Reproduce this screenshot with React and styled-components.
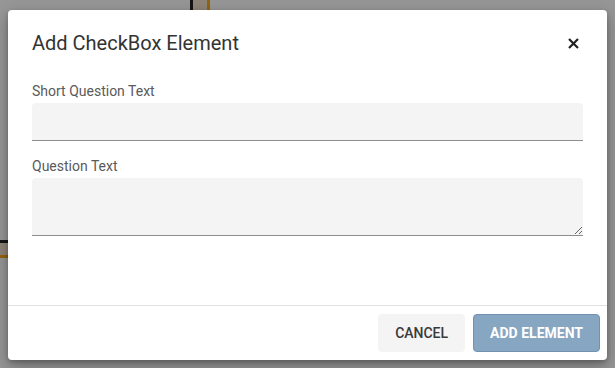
import React from "react"
import styled, { createGlobalStyle } from "styled-components"

const GlobalStyle = createGlobalStyle`
    html, body {
        margin: 0;
        padding: 0;
        width: 100%;
        height: 100%;
        overflow: hidden;
        font-family: Roboto, "Liberation Sans", sans-serif;
    }
`

const Page = styled.div`
    position: relative;
    width: 615px;
    height: 368px;
    background: #f2f2f2;
    overflow: hidden;
`
// peeks of the canvas underneath the overlay
const CanvasNode = styled.div`
    position: absolute;
    left: ${props => props.left}px;
    top: ${props => props.top}px;
    width: ${props => props.width}px;
    height: ${props => props.height}px;
    background: #e6d6c2;
    border-left: 3px solid #222;
    border-right: ${props => props.accentRight ? "3px solid #f0a018" : "none"};
    border-top: ${props => props.darkTop ? "3px solid #222" : "none"};
    border-bottom: ${props => props.accentBottom ? "3px solid #f0a018" : "none"};
`
const Overlay = styled.div`
    position: absolute;
    inset: 0;
    background: rgba(0, 0, 0, 0.38);
    display: flex;
    align-items: flex-start;
    padding: 10px 8px;
    box-sizing: border-box;
`
const Dialog = styled.div`
    width: 599px;
    height: 350px;
    background: #fff;
    border-radius: 4px;
    box-shadow: 0 6px 16px rgba(0, 0, 0, 0.3), 0 2px 4px rgba(0, 0, 0, 0.2);
    display: flex;
    flex-direction: column;
`
const Header = styled.div`
    display: flex;
    align-items: center;
    justify-content: space-between;
    padding: 18px 24px 0 24px;
    height: 48px;
    box-sizing: border-box;
`
const Title = styled.h2`
    margin: 0;
    font-size: 20px;
    font-weight: 400;
    color: #333;
    line-height: 28px;
`
const CloseButton = styled.button`
    border: none;
    background: none;
    padding: 0;
    margin-right: 2px;
    width: 16px;
    height: 16px;
    display: flex;
    align-items: center;
    justify-content: center;
    cursor: pointer;
`
const Body = styled.div`
    flex: 1;
    padding: 25px 24px 0 24px;
    display: flex;
    flex-direction: column;
    gap: 17px;
`
const Field = styled.div`
    display: flex;
    flex-direction: column;
`
const Label = styled.label`
    font-size: 14px;
    color: #5a5a5a;
    line-height: 16px;
    margin-bottom: 4px;
`
const TextInput = styled.input`
    height: 38px;
    box-sizing: border-box;
    border: none;
    border-bottom: 1px solid #8e8e8e;
    border-radius: 4px 4px 0 0;
    background: #f4f4f4;
    outline: none;
    font-family: inherit;
    font-size: 14px;
    padding: 0 12px;
`
const TextArea = styled.textarea`
    height: 58px;
    box-sizing: border-box;
    border: none;
    border-bottom: 1px solid #8e8e8e;
    border-radius: 4px 4px 0 0;
    background: #f4f4f4;
    outline: none;
    font-family: inherit;
    font-size: 14px;
    padding: 8px 12px;
    resize: vertical;
`
const Footer = styled.div`
    border-top: 1px solid #e0e0e0;
    display: flex;
    justify-content: flex-end;
    gap: 8px;
    padding: 8px 7px 8px 8px;
`
const Button = styled.button`
    height: 38px;
    padding: 0 16px;
    border-radius: 4px;
    border: 1px solid ${props => props.primary ? "#7091b0" : "#f4f4f4"};
    background: ${props => props.primary ? "#87a6c2" : "#f4f4f4"};
    color: ${props => props.primary ? "#fff" : "#3a3a3a"};
    font-family: Roboto, "Liberation Sans", sans-serif;
    font-size: 14px;
    font-weight: ${props => props.primary ? 700 : 500};
    text-transform: uppercase;
    cursor: pointer;
`

const App = () => {
    return (
        <Page>
            <GlobalStyle />
            <CanvasNode left={190} top={-40} width={14} height={50} accentRight />
            <CanvasNode left={-10} top={240} width={30} height={12} darkTop accentBottom />
            <Overlay>
                <Dialog>
                    <Header>
                        <Title>Add CheckBox Element</Title>
                        <CloseButton aria-label="Close">
                            <svg width="11" height="11" viewBox="0 0 11 11">
                                <path d="M1 1 L10 10 M10 1 L1 10" stroke="#222" strokeWidth="2.2" />
                            </svg>
                        </CloseButton>
                    </Header>
                    <Body>
                        <Field>
                            <Label>Short Question Text</Label>
                            <TextInput type="text" />
                        </Field>
                        <Field>
                            <Label>Question Text</Label>
                            <TextArea />
                        </Field>
                    </Body>
                    <Footer>
                        <Button>Cancel</Button>
                        <Button primary>Add Element</Button>
                    </Footer>
                </Dialog>
            </Overlay>
        </Page>
    )
}

export default App
